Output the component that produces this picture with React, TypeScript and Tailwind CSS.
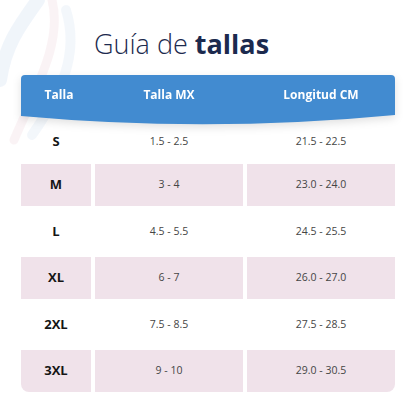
const rows = [
  { size: 'S', mx: '1.5 - 2.5', cm: '21.5 - 22.5' },
  { size: 'M', mx: '3 - 4', cm: '23.0 - 24.0' },
  { size: 'L', mx: '4.5 - 5.5', cm: '24.5 - 25.5' },
  { size: 'XL', mx: '6 - 7', cm: '26.0 - 27.0' },
  { size: '2XL', mx: '7.5 - 8.5', cm: '27.5 - 28.5' },
  { size: '3XL', mx: '9 - 10', cm: '29.0 - 30.5' }
]

function Waves() {
  return (
    <svg className="absolute left-0 top-0" width="90" height="170" viewBox="0 0 90 170" fill="none" opacity="0.45">
      <path d="M38 0 C 20 25, 5 45, 0 80" stroke="#dfe9f6" strokeWidth="14" strokeLinecap="round" />
      <path d="M52 0 C 62 40, 40 80, 14 140" stroke="#f6e6ea" strokeWidth="9" strokeLinecap="round" />
      <path d="M66 10 C 80 55, 60 95, 32 135" stroke="#e6eef8" strokeWidth="10" strokeLinecap="round" />
    </svg>
  )
}

export default function App() {
  return (
    <div
      className="relative w-[416px] h-[416px] overflow-hidden bg-white"
      style={{ fontFamily: '"Open Sans", "Noto Sans", sans-serif' }}
    >
      <Waves />
      <div className="relative px-[21px] pt-[26px]">
        <h1 className="text-[27px] leading-[36px] text-[#1c2a4e] pl-[73px]">
          <span className="font-light">Guía de </span>
          <span className="font-bold">tallas</span>
        </h1>

        {/* header */}
        <div className="mt-[13px] drop-shadow-[0_3px_4px_rgba(0,0,0,0.12)]">
          <div className="grid grid-cols-[70px_148px_1fr] gap-x-[4px] h-[40px] items-center bg-[#428bd0] rounded-t-[4px] text-white text-[12px] font-bold">
            <div className="text-center pl-[6px]">Talla</div>
            <div className="text-center">Talla MX</div>
            <div className="text-center">Longitud CM</div>
          </div>
          <svg className="block" width="374" height="10" viewBox="0 0 374 10">
            <path d="M0 0 L374 0 L374 0 Q187 18 0 1 Z" fill="#428bd0" />
          </svg>
        </div>

        <div className="flex flex-col gap-[4.5px]">
          {rows.map((r, i) => {
            const pink = i % 2 === 1
            const last = i === rows.length - 1
            const cell = pink ? 'bg-[#f0e2ea]' : ''
            return (
              <div
                key={r.size}
                className={`grid grid-cols-[70px_148px_1fr] gap-x-[4px] ${i === 0 ? 'h-[34px] mb-[0.5px]' : 'h-[42px]'}`}
              >
                <div className={`flex items-center justify-center text-[13px] font-bold text-[#151515] ${cell} ${last ? 'rounded-bl-[8px]' : ''}`}>
                  {r.size}
                </div>
                <div className={`flex items-center justify-center text-[10.5px] text-[#454545] ${cell}`}>{r.mx}</div>
                <div className={`flex items-center justify-center text-[10.5px] text-[#454545] ${cell} ${last ? 'rounded-br-[8px]' : ''}`}>
                  {r.cm}
                </div>
              </div>
            )
          })}
        </div>
      </div>
    </div>
  )
}
